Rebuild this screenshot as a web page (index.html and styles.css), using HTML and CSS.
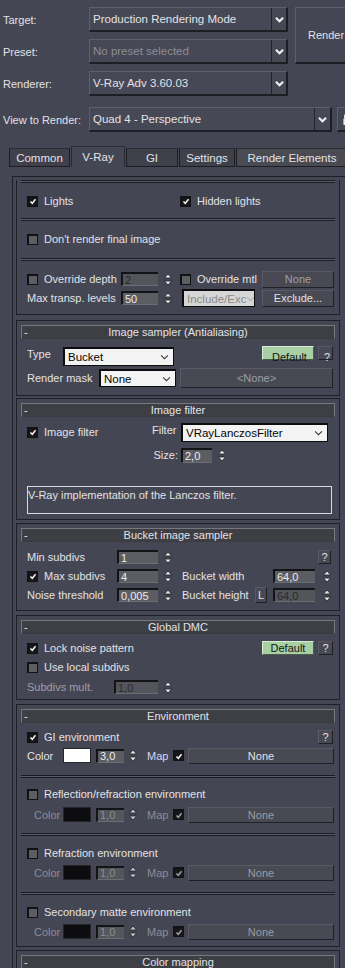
FILE: index.html
```html
<!DOCTYPE html>
<html>
<head>
    <meta charset="UTF-8">
    <title>Render Setup: V-Ray Adv 3.60.03</title>

    <link rel="stylesheet" href="styles.css">

</head>

<body>

<div class="top">
    <div class="lbl">Target:</div>
    <div class="combo">
        <span class="combo-text">Production Rendering Mode</span>
        <span class="combo-arrow"><svg viewBox="0 0 10 7"><path d="M1 1.5 5 5.5 9 1.5"/></svg></span>
    </div>
    <div class="render-btn">Render</div>

    <div class="lbl">Preset:</div>
    <div class="combo">
        <span class="combo-text dim">No preset selected</span>
        <span class="combo-arrow"><svg viewBox="0 0 10 7"><path d="M1 1.5 5 5.5 9 1.5"/></svg></span>
    </div>

    <div class="lbl">Renderer:</div>
    <div class="combo">
        <span class="combo-text">V-Ray Adv 3.60.03</span>
        <span class="combo-arrow"><svg viewBox="0 0 10 7"><path d="M1 1.5 5 5.5 9 1.5"/></svg></span>
    </div>
</div>

<div class="view-row">
    <div class="lbl view-lbl">View to Render:</div>
    <div class="combo view-combo">
        <span class="combo-text">Quad 4 - Perspective</span>
        <span class="combo-arrow"><svg viewBox="0 0 10 7"><path d="M1 1.5 5 5.5 9 1.5"/></svg></span>
    </div>
    <div class="lock-btn">
        <svg viewBox="0 0 12 14"><path class="lock-arc" d="M3 6V4a3 3 0 0 1 6 0v2"/><rect x="1.5" y="6" width="9" height="7" rx="1"/></svg>
    </div>
</div>

<div class="tabs">
    <div class="tab tab-common">Common</div>
    <div class="tab tab-vray active">V-Ray</div>
    <div class="tab tab-gi">GI</div>
    <div class="tab tab-settings">Settings</div>
    <div class="tab tab-elements">Render Elements</div>
</div>

<div class="panel">

    <!-- Global switches (scrolled) -->
    <div class="rollout r-global">
        <div class="sep"></div>
        <div class="row h20 mt8">
            <div class="chk w153"><span class="cb on"><svg viewBox="0 0 11 11"><path d="M2 5.5 4.5 8 9 2.5"/></svg></span>Lights</div>
            <div class="chk"><span class="cb on"><svg viewBox="0 0 11 11"><path d="M2 5.5 4.5 8 9 2.5"/></svg></span>Hidden lights</div>
        </div>
        <div class="sep mt7"></div>
        <div class="row h20 mt8">
            <div class="chk"><span class="cb"></span>Don't render final image</div>
        </div>
        <div class="sep mt9"></div>
        <div class="row h18 mt9">
            <div class="chk w94"><span class="cb"></span>Override depth</div>
            <div class="fld w37 fld-off">2</div>
            <svg class="spin" viewBox="0 0 10 15"><path d="M5 2 8.5 6h-7z M5 13 8.5 9h-7z"/></svg>
            <div class="chk w82 ml7"><span class="cb"></span>Override mtl</div>
            <div class="btn w72 h17 txt-off">None</div>
        </div>
        <div class="row h18 mt1">
            <div class="lbl w94">Max transp. levels</div>
            <div class="fld w37">50</div>
            <svg class="spin" viewBox="0 0 10 15"><path d="M5 2 8.5 6h-7z M5 13 8.5 9h-7z"/></svg>
            <div class="dd dd-off w73 h18 ml9">Include/Exc<svg viewBox="0 0 10 7"><path d="M1 1.5 5 5.5 9 1.5"/></svg></div>
            <div class="btn w72 h17 ml7">Exclude...</div>
        </div>
    </div>

    <!-- Image sampler -->
    <div class="rollout mt5">
        <div class="title"><span class="minus">-</span><span>Image sampler (Antialiasing)</span><span></span></div>
        <div class="row h20 mt7 pr2">
            <div class="lbl w36 up">Type</div>
            <div class="dd w111 h19">Bucket<svg viewBox="0 0 10 7"><path d="M1 1.5 5 5.5 9 1.5"/></svg></div>
            <div class="btn btn-def w52 h14 top push">Default</div>
            <div class="btn w15 h14 top ml4">?</div>
        </div>
        <div class="row h20 mt2 pr2">
            <div class="lbl w72">Render mask</div>
            <div class="dd w77 h18">None<svg viewBox="0 0 10 7"><path d="M1 1.5 5 5.5 9 1.5"/></svg></div>
            <div class="btn w153 h20 ml4 txt-off">&lt;None&gt;</div>
        </div>
    </div>

    <!-- Image filter -->
    <div class="rollout mt2 pb5">
        <div class="title"><span class="minus">-</span><span>Image filter</span><span></span></div>
        <div class="row h20 mt5">
            <div class="chk w125"><span class="cb on"><svg viewBox="0 0 11 11"><path d="M2 5.5 4.5 8 9 2.5"/></svg></span>Image filter</div>
            <div class="lbl w29 up">Filter</div>
            <div class="dd w147 h19">VRayLanczosFilter<svg viewBox="0 0 10 7"><path d="M1 1.5 5 5.5 9 1.5"/></svg></div>
        </div>
        <div class="row h16 mt5">
            <div class="lbl w154 right">Size:</div>
            <div class="fld w31 h15">2,0</div>
            <svg class="spin" viewBox="0 0 10 15"><path d="M5 2 8.5 6h-7z M5 13 8.5 9h-7z"/></svg>
        </div>
        <div class="desc">V-Ray implementation of the Lanczos filter.</div>
    </div>

    <!-- Bucket image sampler -->
    <div class="rollout mt3">
        <div class="title"><span class="minus">-</span><span>Bucket image sampler</span><span></span></div>
        <div class="row h16 mt7 pr4">
            <div class="lbl w90">Min subdivs</div>
            <div class="fld w41">1</div>
            <svg class="spin" viewBox="0 0 10 15"><path d="M5 2 8.5 6h-7z M5 13 8.5 9h-7z"/></svg>
            <div class="btn w13 h14 push">?</div>
        </div>
        <div class="row h16 mt3">
            <div class="chk w90"><span class="cb on"><svg viewBox="0 0 11 11"><path d="M2 5.5 4.5 8 9 2.5"/></svg></span>Max subdivs</div>
            <div class="fld w41">4</div>
            <svg class="spin" viewBox="0 0 10 15"><path d="M5 2 8.5 6h-7z M5 13 8.5 9h-7z"/></svg>
            <div class="lbl w91 ml9">Bucket width</div>
            <div class="fld w42">64,0</div>
            <svg class="spin ml7" viewBox="0 0 10 15"><path d="M5 2 8.5 6h-7z M5 13 8.5 9h-7z"/></svg>
        </div>
        <div class="row h16 mt3">
            <div class="lbl w90">Noise threshold</div>
            <div class="fld w41">0,005</div>
            <svg class="spin" viewBox="0 0 10 15"><path d="M5 2 8.5 6h-7z M5 13 8.5 9h-7z"/></svg>
            <div class="lbl w73 ml9">Bucket height</div>
            <div class="btn w12 h16">L</div>
            <div class="fld w42 ml6 fld-off">64,0</div>
            <svg class="spin ml7" viewBox="0 0 10 15"><path d="M5 2 8.5 6h-7z M5 13 8.5 9h-7z"/></svg>
        </div>
    </div>

    <!-- Global DMC -->
    <div class="rollout mt4 pb4">
        <div class="title"><span class="minus">-</span><span>Global DMC</span><span></span></div>
        <div class="row h16 mt6 pr2">
            <div class="chk"><span class="cb on"><svg viewBox="0 0 11 11"><path d="M2 5.5 4.5 8 9 2.5"/></svg></span>Lock noise pattern</div>
            <div class="btn btn-def w52 h14 push">Default</div>
            <div class="btn w15 h14 ml4">?</div>
        </div>
        <div class="row h16 mt3">
            <div class="chk"><span class="cb"></span>Use local subdivs</div>
        </div>
        <div class="row h16 mt4">
            <div class="lbl w87 txt-off">Subdivs mult.</div>
            <div class="fld w44 fld-off">1,0</div>
            <svg class="spin" viewBox="0 0 10 15"><path d="M5 2 8.5 6h-7z M5 13 8.5 9h-7z"/></svg>
        </div>
    </div>

    <!-- Environment -->
    <div class="rollout mt4 pb6">
        <div class="title"><span class="minus">-</span><span>Environment</span><span></span></div>
        <div class="row h16 mt6 pr2">
            <div class="chk"><span class="cb on"><svg viewBox="0 0 11 11"><path d="M2 5.5 4.5 8 9 2.5"/></svg></span>GI environment</div>
            <div class="btn w15 h14 push">?</div>
        </div>
        <div class="row h17 mt2">
            <div class="lbl w36">Color</div>
            <div class="swatch white"></div>
            <div class="fld w28 ml5">3,0</div>
            <svg class="spin ml4" viewBox="0 0 10 15"><path d="M5 2 8.5 6h-7z M5 13 8.5 9h-7z"/></svg>
            <div class="lbl w26 ml9 map">Map</div>
            <span class="cb on"><svg viewBox="0 0 11 11"><path d="M2 5.5 4.5 8 9 2.5"/></svg></span>
            <div class="btn w146 h16">None</div>
        </div>

        <div class="sep mt11"></div>
        <div class="row h16 mt8">
            <div class="chk"><span class="cb"></span>Reflection/refraction environment</div>
        </div>
        <div class="row h17 mt4 off">
            <div class="lbl w29 ml7">Color</div>
            <div class="swatch"></div>
            <div class="fld w28 ml5">1,0</div>
            <svg class="spin ml4" viewBox="0 0 10 15"><path d="M5 2 8.5 6h-7z M5 13 8.5 9h-7z"/></svg>
            <div class="lbl w26 ml9">Map</div>
            <span class="cb on"><svg viewBox="0 0 11 11"><path d="M2 5.5 4.5 8 9 2.5"/></svg></span>
            <div class="btn w146 h16">None</div>
        </div>

        <div class="sep mt10"></div>
        <div class="row h16 mt9">
            <div class="chk"><span class="cb"></span>Refraction environment</div>
        </div>
        <div class="row h17 mt3 off">
            <div class="lbl w29 ml7">Color</div>
            <div class="swatch"></div>
            <div class="fld w28 ml5">1,0</div>
            <svg class="spin ml4" viewBox="0 0 10 15"><path d="M5 2 8.5 6h-7z M5 13 8.5 9h-7z"/></svg>
            <div class="lbl w26 ml9">Map</div>
            <span class="cb on"><svg viewBox="0 0 11 11"><path d="M2 5.5 4.5 8 9 2.5"/></svg></span>
            <div class="btn w146 h16">None</div>
        </div>

        <div class="sep mt11"></div>
        <div class="row h16 mt9">
            <div class="chk"><span class="cb"></span>Secondary matte environment</div>
        </div>
        <div class="row h17 mt3 off">
            <div class="lbl w29 ml7">Color</div>
            <div class="swatch"></div>
            <div class="fld w28 ml5">1,0</div>
            <svg class="spin ml4" viewBox="0 0 10 15"><path d="M5 2 8.5 6h-7z M5 13 8.5 9h-7z"/></svg>
            <div class="lbl w26 ml9">Map</div>
            <span class="cb on"><svg viewBox="0 0 11 11"><path d="M2 5.5 4.5 8 9 2.5"/></svg></span>
            <div class="btn w146 h16">None</div>
        </div>
    </div>

    <!-- Color mapping (cut off by the window) -->
    <div class="rollout mt3">
        <div class="title"><span class="minus">-</span><span>Color mapping</span><span></span></div>
    </div>

</div>

</body>
</html>
```

FILE: styles.css
```css
body {
    margin: 0;
    width: 345px;
    height: 968px;
    overflow: hidden;
    background: #454653;
    color: #e2e2e6;
    font: 11px "Liberation Sans", Arial, sans-serif;
}

svg {
    display: block;
}

/* top block */

.top {
    display: grid;
    grid-template-columns: 86px 199px 60px;
    grid-auto-rows: 25px;
    row-gap: 7px;
    padding: 7px 0 0 3px;
}

.lbl {
    display: flex;
    align-items: center;
    white-space: nowrap;
    flex: none;
}

.combo {
    display: flex;
    box-sizing: border-box;
    background: #474855;
    border-top: 1px solid #5e5f6c;
    border-left: 1px solid #5e5f6c;
    border-right: 2px solid #1d1e24;
    border-bottom: 2px solid #1d1e24;
}

.combo-text {
    flex: 1;
    display: flex;
    align-items: center;
    padding-left: 3px;
    white-space: nowrap;
    overflow: hidden;
    font-size: 11.5px;
}

.combo-text.dim {
    color: #8c8d97;
}

.combo-arrow {
    width: 14px;
    border-left: 1px solid #23242b;
    display: flex;
    align-items: center;
    justify-content: center;
}

.combo-arrow svg {
    width: 9px;
    height: 7px;
    fill: none;
    stroke: #f2f2f2;
    stroke-width: 2.2;
}

.render-btn {
    grid-row: 1 / span 2;
    grid-column: 3;
    margin-left: 7px;
    box-sizing: border-box;
    border-top: 1px solid #5e5f6c;
    border-left: 1px solid #5e5f6c;
    border-bottom: 2px solid #1d1e24;
    display: flex;
    align-items: center;
    padding-left: 12px;
    font-size: 11px;
    white-space: nowrap;
}

.view-row {
    display: flex;
    height: 25px;
    margin-top: 11px;
    padding-left: 3px;
}

.view-lbl {
    width: 86px;
}

.view-combo {
    width: 243px;
    flex: none;
}

.view-combo .combo-arrow {
    width: 15px;
}

.lock-btn {
    margin-left: 5px;
    width: 20px;
    flex: none;
    box-sizing: border-box;
    border-top: 1px solid #5e5f6c;
    border-left: 1px solid #5e5f6c;
    border-bottom: 2px solid #1d1e24;
    display: flex;
    align-items: center;
    padding-left: 4px;
}

.lock-btn svg {
    width: 11px;
    height: 13px;
    fill: #ececec;
}

.lock-arc {
    fill: none;
    stroke: #ececec;
    stroke-width: 1.6;
}

/* tabs */

.tabs {
    display: flex;
    align-items: flex-end;
    height: 21px;
    margin: 14px 0 0 9px;
}

.tab {
    height: 19px;
    box-sizing: border-box;
    border: 1px solid #1d1e25;
    border-top-color: #2a2b33;
    background: #3f404a;
    display: flex;
    align-items: center;
    justify-content: center;
    margin-right: 1px;
    flex: none;
    font-size: 11.5px;
}

.tab.active {
    height: 21px;
    background: #454653;
    border-color: #2a2b33;
    border-bottom: none;
}

.tab-common { width: 61px; }
.tab-vray { width: 54px; }
.tab-gi { width: 52px; }
.tab-settings { width: 56px; }
.tab-elements { width: 112px; background: #494a52; }

/* panel with rollouts */

.panel {
    margin: 9px 0 0 12px;
    border-left: 1px solid #1f2027;
    border-top: 1px solid #1f2027;
    padding: 3px 0 0 3px;
}

.rollout {
    width: 324px;
    box-sizing: border-box;
    border: 1px solid #1f2027;
    padding: 4px 4px 7px;
}

.r-global {
    border-top: none;
    padding-top: 0;
}

.title {
    height: 14px;
    box-sizing: border-box;
    border: 1px solid #77777e;
    border-bottom-color: #3a3a40;
    background: #3e3f45;
    display: grid;
    grid-template-columns: 1fr auto 1fr;
    align-items: center;
    line-height: 12px;
}

.minus {
    padding-left: 2px;
}

.sep {
    height: 1px;
    border-top: 1px solid #1b1c22;
    border-bottom: 1px solid #1b1c22;
    background: #5a5b68;
}

.row {
    display: flex;
    align-items: center;
    padding-left: 6px;
}

.chk {
    display: flex;
    align-items: center;
    white-space: nowrap;
    flex: none;
}

.cb {
    width: 11px;
    height: 11px;
    box-sizing: border-box;
    border: 1px solid #121214;
    border-top-width: 2px;
    border-left-width: 2px;
    background: #5d5d62;
    margin-right: 6px;
    flex: none;
    display: flex;
    align-items: center;
    justify-content: center;
}

.cb.on {
    background: #18181b;
}

.cb svg {
    width: 9px;
    height: 9px;
    fill: none;
    stroke: #f4f4f4;
    stroke-width: 2;
}

.fld {
    height: 14px;
    box-sizing: border-box;
    background: #5c5d62;
    border-top: 2px solid #141416;
    border-left: 2px solid #141416;
    border-bottom: 1px solid #6d6e73;
    padding-left: 2px;
    display: flex;
    align-items: center;
    flex: none;
    color: #ececec;
}

.fld-off {
    color: #2a2a2e;
    background: #54555a;
}

.spin {
    width: 10px;
    height: 15px;
    margin-left: 5px;
    flex: none;
    fill: #e6e6e8;
    stroke: #1e1e22;
    stroke-width: 0.8;
}

.btn {
    box-sizing: border-box;
    border: 1px solid #1f2027;
    border-top-color: #595a66;
    border-left-color: #595a66;
    background: #484952;
    display: flex;
    align-items: center;
    justify-content: center;
    flex: none;
    white-space: nowrap;
}

.btn-def {
    background: #a9cfa5;
    color: #151515;
    border-color: #d9ecd6 #4b5d49 #4b5d49 #d9ecd6;
}

.txt-off {
    color: #9e9fa8;
}

.dd {
    box-sizing: border-box;
    background: #f3f3f3;
    color: #050505;
    border: 2px solid #0c0c0c;
    border-right-width: 1px;
    border-bottom-width: 1px;
    display: flex;
    align-items: center;
    justify-content: space-between;
    padding: 0 4px 0 3px;
    flex: none;
    font-size: 11.5px;
    white-space: nowrap;
    overflow: hidden;
}

.dd svg {
    width: 9px;
    height: 6px;
    flex: none;
    fill: none;
    stroke: #3a3a3a;
    stroke-width: 1.2;
}

.dd-off {
    background: #d6d6d6;
    color: #8a8a8a;
}

.dd-off svg {
    stroke: #b0b0b0;
}

.desc {
    margin: 23px 0 0 6px;
    width: 305px;
    height: 28px;
    box-sizing: border-box;
    border: 1px solid #d8d8dc;
    padding-top: 2px;
    white-space: nowrap;
}

.swatch {
    width: 28px;
    height: 15px;
    box-sizing: border-box;
    border: 1px solid #26262a;
    background: #0d0d0f;
    flex: none;
}

.swatch.white {
    background: #ffffff;
}

.map {
    color: #d6d6f2;
}

.off {
    color: #8b8c95;
}

.off .fld {
    color: #8b8c95;
    background: #55565b;
}

.off .spin {
    fill: #c8c8cc;
}

.off .cb svg {
    stroke: #a0a0a6;
}

.off .btn {
    color: #9a9ba4;
}

.row .cb + .btn {
    margin-left: -2px;
}

.up { align-self: flex-start; height: 16px; }
.btn.top { align-self: flex-start; }
.right { justify-content: flex-end; padding-right: 3px; box-sizing: border-box; }
.push { margin-left: auto; }

/* sizes */

.h14 { height: 14px; }
.h15 { height: 15px; }
.h16 { height: 16px; }
.h17 { height: 17px; }
.h18 { height: 18px; }
.h19 { height: 19px; }
.h20 { height: 20px; }

.w12 { width: 12px; }
.w13 { width: 13px; }
.w15 { width: 15px; }
.w26 { width: 26px; }
.w28 { width: 28px; }
.w29 { width: 29px; }
.w31 { width: 31px; }
.w36 { width: 36px; }
.w37 { width: 37px; }
.w41 { width: 41px; }
.w42 { width: 42px; }
.w44 { width: 44px; }
.w52 { width: 52px; }
.w72 { width: 72px; }
.w73 { width: 73px; }
.w77 { width: 77px; }
.w82 { width: 82px; }
.w87 { width: 87px; }
.w90 { width: 90px; }
.w91 { width: 91px; }
.w94 { width: 94px; }
.w111 { width: 111px; }
.w125 { width: 125px; }
.w146 { width: 146px; }
.w147 { width: 147px; }
.w153 { width: 153px; }
.w154 { width: 154px; }

.mt1 { margin-top: 1px; }
.mt2 { margin-top: 2px; }
.mt3 { margin-top: 3px; }
.mt4 { margin-top: 4px; }
.mt5 { margin-top: 5px; }
.mt6 { margin-top: 6px; }
.mt7 { margin-top: 7px; }
.mt8 { margin-top: 8px; }
.mt9 { margin-top: 9px; }
.mt10 { margin-top: 10px; }
.mt11 { margin-top: 11px; }

.ml4 { margin-left: 4px; }
.ml5 { margin-left: 5px; }
.ml6 { margin-left: 6px; }
.ml7 { margin-left: 7px; }
.ml9 { margin-left: 9px; }

.pr2 { padding-right: 2px; }
.pr4 { padding-right: 4px; }
.pb4 { padding-bottom: 4px; }
.pb5 { padding-bottom: 5px; }
.pb6 { padding-bottom: 6px; }
```
